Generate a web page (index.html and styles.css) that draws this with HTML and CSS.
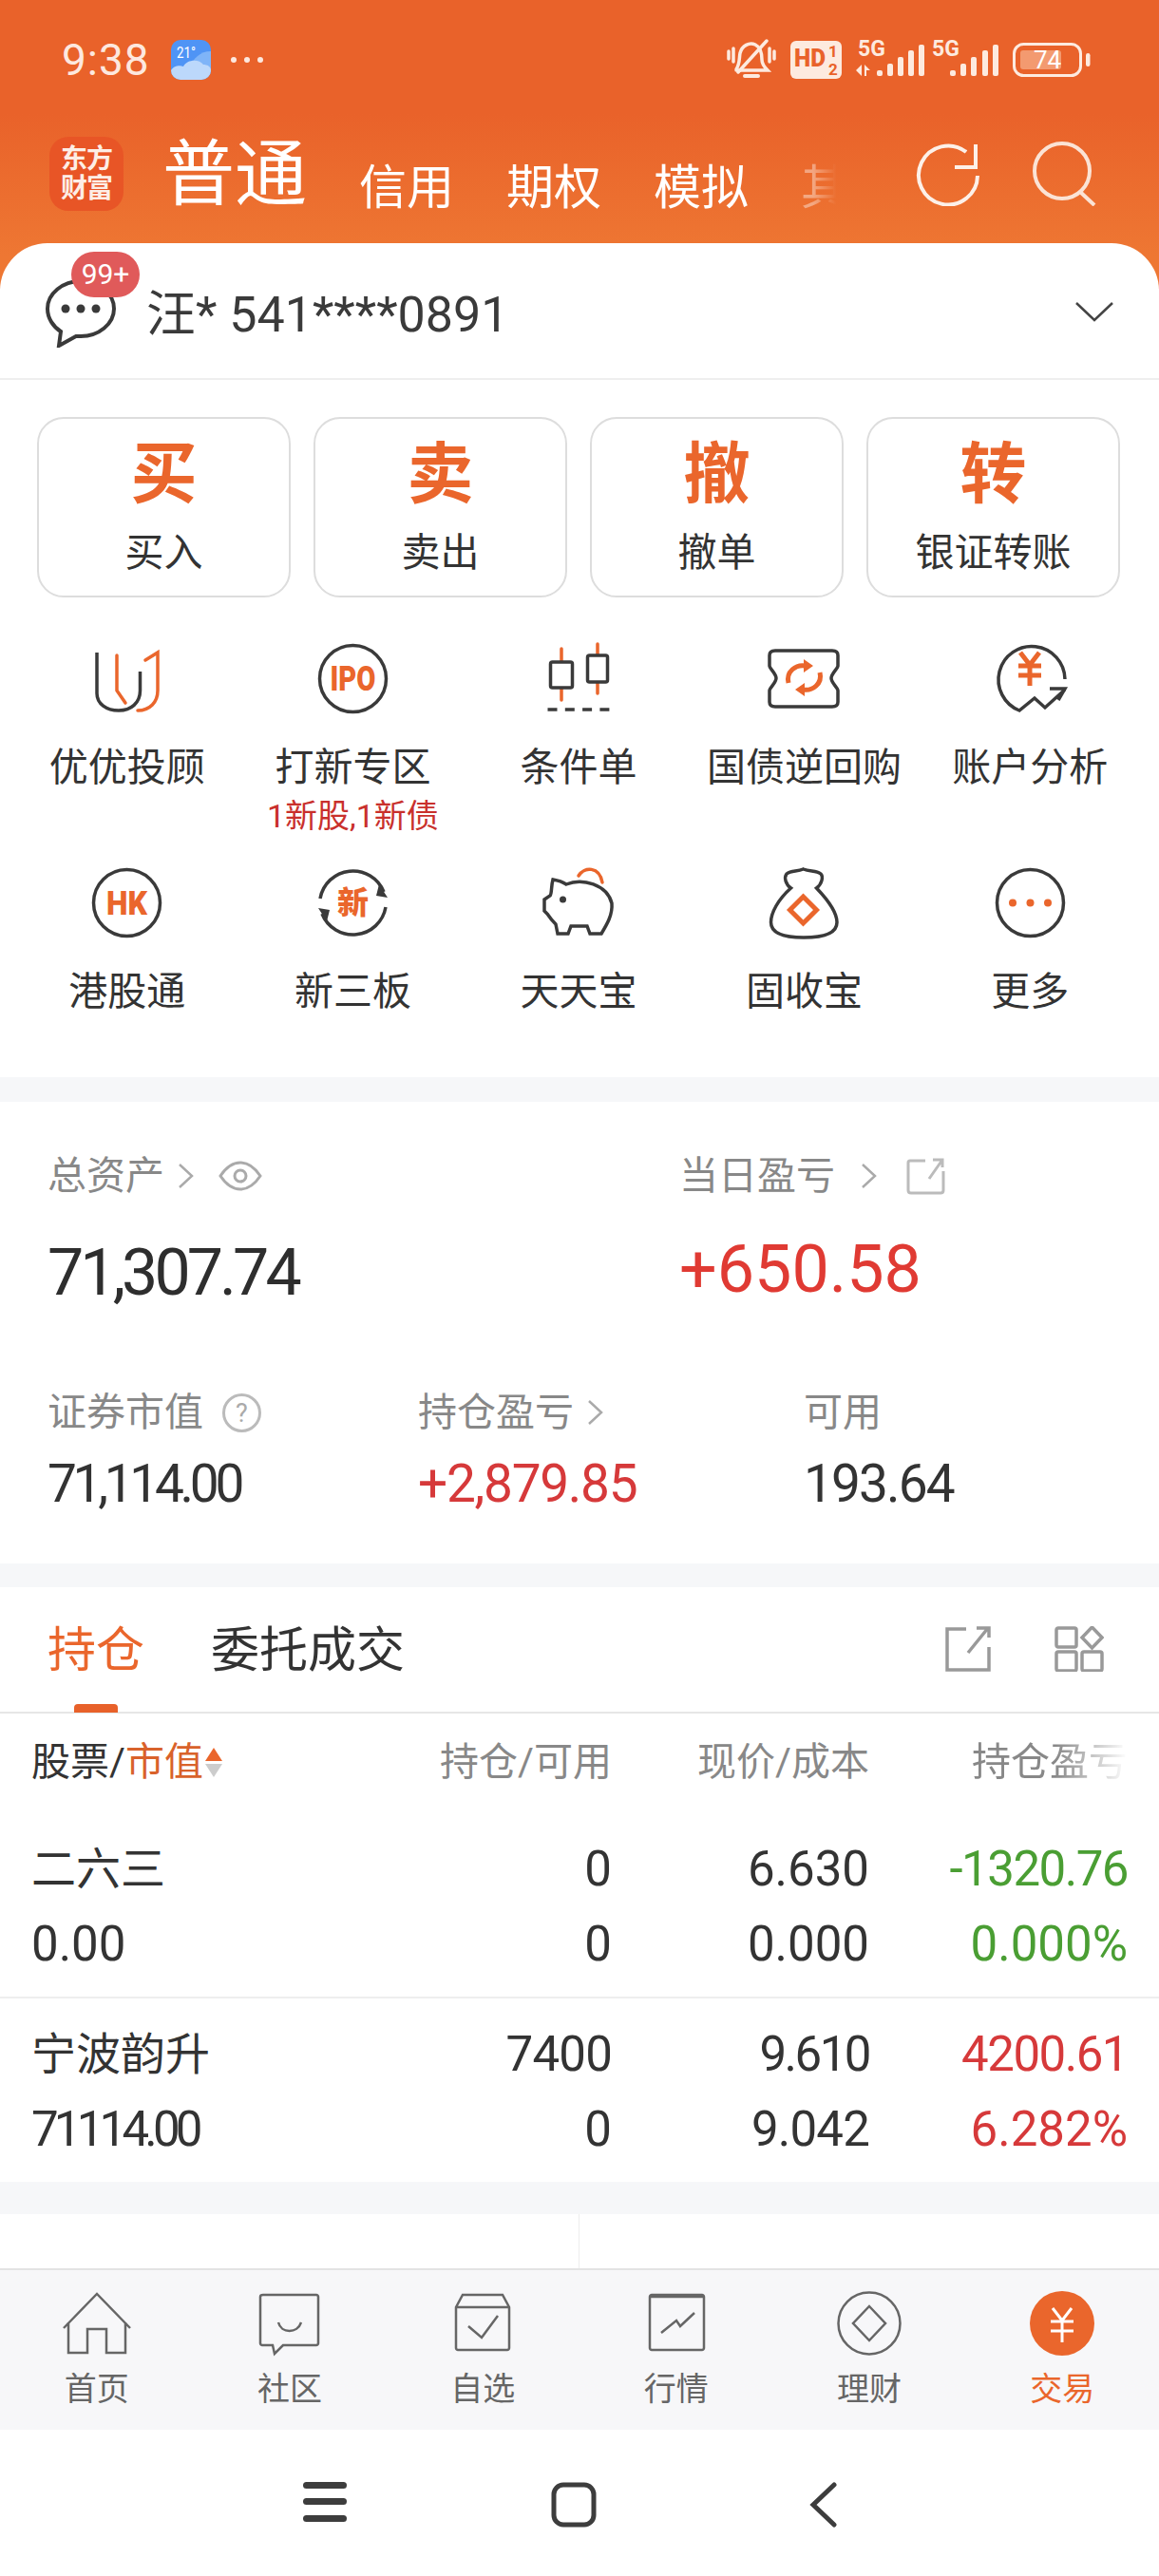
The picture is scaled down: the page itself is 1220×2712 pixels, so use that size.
FILE: index.html
```html
<!DOCTYPE html>
<html lang="zh">
<head>
  <meta charset="UTF-8">
  <title>东方财富 交易</title>
  <link rel="stylesheet" href="styles.css">
</head>
<body>
<div class="page">

  <header class="header">
    <div class="status">
      <span class="time">9:38</span>
      <svg class="weather" viewBox="0 0 42 42" width="42" height="42">
        <rect width="42" height="42" rx="10" fill="#4f94f5"/>
        <path d="M42 12C30 12 24 20 20 27L42 34Z" fill="#7fb4f8"/>
        <path d="M0 32C4 26 10 27 13 28C17 20 30 20 34 26C38 26 42 28 42 32V32A10 10 0 0 1 32 42H10A10 10 0 0 1 0 32Z" fill="#bcd8fb"/>
        <text x="6" y="19" class="weather-text" textLength="20" lengthAdjust="spacingAndGlyphs">21°</text>
      </svg>
      <span class="more-dots"><i></i><i></i><i></i></span>
      <div class="status-right">
        <svg viewBox="0 0 52 44" width="52" height="44" fill="none" stroke="#fdeadf" stroke-width="3.500" stroke-linecap="round">
          <path d="M10 32C14 26 13 20 14 15C16 7 24 3 30 6C36 9 37 16 37 22C37 27 40 30 43 33H10"/>
          <path d="M12 35L42 2"/>
          <path d="M19 39H33" stroke-width="4"/>
          <path d="M2 13V21M7 10V24M45 10V24M50 13V21"/>
        </svg>
        <svg viewBox="0 0 54 40" width="54" height="40">
          <rect width="54" height="40" rx="6" fill="#fdeadf"/>
          <text x="4" y="27" class="hd-text" textLength="33" lengthAdjust="spacingAndGlyphs">HD</text>
          <text x="40" y="17" class="hd-small">1</text>
          <text x="40" y="36" class="hd-small">2</text>
        </svg>
        <svg class="sig" viewBox="0 0 72 42" width="72" height="42" fill="#fdeadf">
          <text x="2" y="17" class="five-g">5G</text>
          <path d="M0 32L6 26V38ZM9 26L15 32L11 32V38H9Z"/>
          <rect x="22" y="32" width="6" height="6" rx="2"/><rect x="33" y="25" width="6" height="13" rx="2"/><rect x="44" y="18" width="6" height="20" rx="2"/><rect x="55" y="11" width="6" height="27" rx="2"/><rect x="66" y="5" width="6" height="33" rx="2"/>
        </svg>
        <svg class="sig sig-two" viewBox="0 0 72 42" width="72" height="42" fill="#fdeadf">
          <text x="2" y="17" class="five-g">5G</text>
          <rect x="21" y="32" width="6" height="6" rx="2"/><rect x="32" y="25" width="6" height="13" rx="2"/><rect x="43" y="18" width="6" height="20" rx="2"/><rect x="55" y="11" width="6" height="27" rx="2"/><rect x="66" y="5" width="6" height="33" rx="2"/>
        </svg>
        <svg viewBox="0 0 82 36" width="82" height="36">
          <rect x="1.500" y="1.500" width="70" height="33" rx="10" fill="none" stroke="#fdeadf" stroke-width="3"/>
          <rect x="8" y="8" width="43" height="20" rx="3" fill="#f39a70"/>
          <rect x="77" y="11" width="4.500" height="14" rx="2.200" fill="#fdeadf"/>
          <text x="22" y="27" class="batt-text">74</text>
        </svg>
      </div>
    </div>
    <div class="tabbar">
      <div class="logo">东方<br>财富</div>
      <span class="tab-main">普通</span>
      <div class="tabs">
        <span>信用</span>
        <span>期权</span>
        <span>模拟</span>
        <span class="tab-fade">其</span>
      </div>
      <div class="tab-icons">
        <svg viewBox="0 0 68 68" width="68" height="68" fill="none" stroke="#fdf0e8" stroke-width="4">
          <path d="M65 36A31 31 0 1 1 53 11"/>
          <path d="M63 3V27H41"/>
        </svg>
        <svg viewBox="0 0 68 68" width="68" height="68" fill="none" stroke="#fbe3d5" stroke-width="4">
          <circle cx="31" cy="31" r="29"/>
          <path d="M50 53L65 67"/>
        </svg>
      </div>
    </div>
  </header>

  <main class="card">
    <div class="account">
      <div class="msg">
        <svg viewBox="0 0 74 72" width="74" height="72" fill="none" stroke="#3a3a3a" stroke-width="4">
          <path d="M37 2C18 2 2 15 2 31C2 41 8 50 16 55L14 70L32 60C34 60 36 60 37 60C56 60 72 47 72 31C72 15 56 2 37 2Z"/>
          <circle cx="21" cy="31" r="4.500" fill="#3a3a3a" stroke="none"/>
          <circle cx="37" cy="31" r="4.500" fill="#3a3a3a" stroke="none"/>
          <circle cx="53" cy="31" r="4.500" fill="#3a3a3a" stroke="none"/>
        </svg>
        <span class="badge">99+</span>
      </div>
      <span class="acct-name">汪* 541****0891</span>
      <svg class="acct-arrow" viewBox="0 0 40 22" width="40" height="22" fill="none" stroke="#444" stroke-width="2.500"><path d="M1 2L20 20L39 2"/></svg>
    </div>

    <section class="trade">
      <div class="trade-btns">
        <div class="trade-btn"><b>买</b><span>买入</span></div>
        <div class="trade-btn"><b>卖</b><span>卖出</span></div>
        <div class="trade-btn"><b>撤</b><span>撤单</span></div>
        <div class="trade-btn"><b>转</b><span>银证转账</span></div>
      </div>
      <div class="tools">
        <div class="tool">
          <svg class="ico" viewBox="0 0 75 75">
            <path class="d" d="M6 10V53C6 64 16 71 29 71C42 71 51.500 63 51.500 50V30"/>
            <path class="o" d="M27 13V50L36 63"/>
            <path class="o" d="M57 18L70 10V50C70 62 62 71 49 71"/>
          </svg>
          <span>优优投顾</span>
        </div>
        <div class="tool">
          <svg class="ico" viewBox="0 0 75 75">
            <circle class="d" cx="37.500" cy="37.500" r="35"/>
            <text x="37.500" y="50" class="ico-text" textLength="48" lengthAdjust="spacingAndGlyphs">IPO</text>
          </svg>
          <span>打新专区</span>
          <em>1新股,1新债</em>
        </div>
        <div class="tool">
          <svg class="ico" viewBox="0 0 75 75">
            <path class="o" d="M20 6V60M58 1V53"/>
            <rect class="d fw" x="8.500" y="20" width="23" height="27" rx="2"/>
            <rect class="d fw" x="47.500" y="13" width="21" height="28" rx="2"/>
            <path class="d" d="M5.500 70H70.500" stroke-dasharray="10 8.300"/>
          </svg>
          <span>条件单</span>
        </div>
        <div class="tool">
          <svg class="ico" viewBox="0 0 75 75">
            <path class="d" d="M7 8H67C71 8 73 10 73 13V24C73 27 66 32 66 37C66 42 73 47 73 50V62C73 65 71 67 67 67H7C3 67 1 65 1 62V50C1 47 8 42 8 37C8 32 1 27 1 24V13C1 10 3 8 7 8Z"/>
            <path class="o thick" d="M21 42C18 30 29 22 39 24M54 31C57 43 46 51 36 49"/>
            <path class="o-fill" d="M37 17L47 24L37 31ZM38 42L28 49L38 56Z"/>
          </svg>
          <span>国债逆回购</span>
        </div>
        <div class="tool">
          <svg class="ico" viewBox="0 0 75 75">
            <path class="d" d="M74 38A35 35 0 1 0 26 71L42 58L53 68L74 49M58 48H74L67 60"/>
            <path class="o thick" d="M27 10L37 23L47 10M37 23V45M25 24H49M25 34H49"/>
          </svg>
          <span>账户分析</span>
        </div>
        <div class="tool">
          <svg class="ico" viewBox="0 0 75 75">
            <circle class="d" cx="37.500" cy="37.500" r="35"/>
            <text x="37.500" y="50" class="ico-text hk" textLength="43" lengthAdjust="spacingAndGlyphs">HK</text>
          </svg>
          <span>港股通</span>
        </div>
        <div class="tool">
          <svg class="ico" viewBox="0 0 75 75">
            <path class="d" d="M3 33A35 35 0 0 1 70 26M72 42A35 35 0 0 1 5 49"/>
            <path class="d-fill" d="M65 18L74 32L62 30ZM10 57L1 43L13 45Z"/>
            <text x="37.500" y="49" class="ico-text xin">新</text>
          </svg>
          <span>新三板</span>
        </div>
        <div class="tool">
          <svg class="ico" viewBox="0 0 75 75">
            <path class="o" d="M38 9C44 -1 60 -1 63 16"/>
            <path class="d" d="M11 13C17 14 22 16 25 18C42 11 68 18 73 38C74 50 68 60 62 70H50L47 62H30L27 70H16L14 60C10 56 7 52 5 49L2 46V34L8 30C10 28 9 20 11 13Z"/>
            <circle class="d-fill" cx="21.500" cy="34" r="3.500"/>
          </svg>
          <span>天天宝</span>
        </div>
        <div class="tool">
          <svg class="ico" viewBox="0 0 75 75">
            <path class="d" d="M23.500 22C10 34 2.500 48 2.500 58C2.500 70 18 74 37 74C56 74 72 70 72 58C72 48 62 34 50.500 22C56 18 58 10 55 7C50 3 44 5 36.500 2C30 5 24 3 19 7C16 11 18 18 23.500 22Z"/>
            <path class="o thick" d="M36.500 31L50.500 45L36.500 59L22.500 45Z"/>
          </svg>
          <span>固收宝</span>
        </div>
        <div class="tool">
          <svg class="ico" viewBox="0 0 75 75">
            <circle class="d" cx="37.500" cy="37.500" r="35"/>
            <circle class="o-fill" cx="19" cy="37.500" r="4"/>
            <circle class="o-fill" cx="37.500" cy="37.500" r="4"/>
            <circle class="o-fill" cx="56" cy="37.500" r="4"/>
          </svg>
          <span>更多</span>
        </div>
      </div>
    </section>

    <section class="assets">
      <div class="assets-top">
        <div class="asset-col">
          <div class="label">总资产
            <svg class="chev" viewBox="0 0 17 28"><path d="M2 2L15 14L2 26"/></svg>
            <svg class="eye" viewBox="0 0 46 32" width="46" height="32" fill="none" stroke="#aaa" stroke-width="3"><path d="M2 16C10 4 18 2 23 2C28 2 36 4 44 16C36 28 28 30 23 30C18 30 10 28 2 16Z"/><circle cx="23" cy="16" r="6"/></svg>
          </div>
          <div class="big">71,307.74</div>
        </div>
        <div class="asset-col right-col">
          <div class="label">当日盈亏
            <svg class="chev gap-l" viewBox="0 0 17 28"><path d="M2 2L15 14L2 26"/></svg>
            <svg class="share-sm" viewBox="0 0 41 39" width="41" height="39" fill="none" stroke="#bbb" stroke-width="3"><path d="M20 3H4C2 3 2 4 2 5V34C2 36 3 37 5 37H36C38 37 39 36 39 34V14"/><path d="M24 22L38 2M28 2H38V10"/></svg>
          </div>
          <div class="big red">+650.58</div>
        </div>
      </div>
      <div class="assets-bot">
        <div class="asset-cell c1">
          <div class="label">证券市值
            <svg class="help" viewBox="0 0 41 41" width="41" height="41"><circle cx="20.500" cy="20.500" r="19" fill="none" stroke="#bbb" stroke-width="3"/><text x="20.500" y="30" class="help-text">?</text></svg>
          </div>
          <div class="mid mid-a">71,114.00</div>
        </div>
        <div class="asset-cell c2">
          <div class="label">持仓盈亏
            <svg class="chev" viewBox="0 0 17 28"><path d="M2 2L15 14L2 26"/></svg>
          </div>
          <div class="mid mid-b red-2">+2,879.85</div>
        </div>
        <div class="asset-cell c3">
          <div class="label">可用</div>
          <div class="mid mid-c">193.64</div>
        </div>
      </div>
    </section>

    <section class="positions">
      <div class="pos-tabs">
        <span class="pos-tab active">持仓</span>
        <span class="pos-tab">委托成交</span>
        <div class="pos-icons">
          <svg viewBox="0 0 48 48" width="48" height="48" fill="none" stroke="#999" stroke-width="3.500"><path d="M22 3H2V46H46V22"/><path d="M24 28L45 2M33 2H46V12"/></svg>
          <svg viewBox="0 0 52 48" width="52" height="48" fill="none" stroke="#999" stroke-width="3.500"><rect x="2" y="2" width="21" height="20" rx="2"/><rect x="2" y="27" width="21" height="20" rx="2"/><rect x="29" y="27" width="21" height="20" rx="2"/><path d="M39.500 1L50 12L39.500 23L29 12Z"/></svg>
        </div>
      </div>
      <div class="pos-grid pos-head">
        <div class="head-first">股票/<span class="sort-key">市值</span><span class="sort"><i class="up"></i><i class="down"></i></span></div>
        <div>持仓/可用</div>
        <div>现价/成本</div>
        <div class="fade-right">持仓盈亏</div>
      </div>
      <div class="pos-grid pos-row">
        <div class="name">二六三</div>
        <div>0</div>
        <div>6.630</div>
        <div class="green tight">-1320.76</div>
        <div>0.00</div>
        <div>0</div>
        <div>0.000</div>
        <div class="green">0.000%</div>
      </div>
      <div class="pos-grid pos-row second">
        <div class="name">宁波韵升</div>
        <div class="tight-a">7400</div>
        <div class="tight-b">9.610</div>
        <div class="red-2 tight">4200.61</div>
        <div class="squeeze">71114.00</div>
        <div>0</div>
        <div class="tight-a">9.042</div>
        <div class="red-2">6.282%</div>
      </div>
    </section>

    <div class="blank"><i></i></div>

    <nav class="nav">
      <div class="nav-item">
        <svg viewBox="0 0 80 70" width="80" height="70"><path d="M5 40L40 4L75 40M10 34V66H30V41H50V66H70V34"/></svg>
        <span>首页</span>
      </div>
      <div class="nav-item">
        <svg viewBox="0 0 80 70" width="80" height="70"><path d="M12 5H68C69 5 70 6 70 7V56C70 57 69 58 68 58H33L24 67L22 58H11C10 58 9 57 9 56V7C9 6 10 5 12 5Z"/><path d="M28 34C31 46 48 46 52 34"/></svg>
        <span>社区</span>
      </div>
      <div class="nav-item">
        <svg viewBox="0 0 80 70" width="80" height="70"><path d="M19 5H61L68 18V61C68 62 67 63 66 63H14C13 63 12 62 12 61V18ZM12 18H68"/><path d="M25 38L39 50L56 27"/></svg>
        <span>自选</span>
      </div>
      <div class="nav-item">
        <svg viewBox="0 0 80 70" width="80" height="70"><path d="M14 5H67C68 5 69 6 69 7V61C69 62 68 63 67 63H14C13 63 12 62 12 61V7C12 6 13 5 14 5ZM12 7H69"/><path d="M24 45L40 32L44 38L59 24"/></svg>
        <span>行情</span>
      </div>
      <div class="nav-item">
        <svg viewBox="0 0 80 70" width="80" height="70"><circle cx="40" cy="35" r="32.500"/><path d="M40 17L57 35L40 53L23 35Z"/></svg>
        <span>理财</span>
      </div>
      <div class="nav-item active">
        <svg viewBox="0 0 80 70" width="80" height="70"><circle class="coin" cx="40" cy="35" r="34"/><path class="coin-mark" d="M30 19L40 32L50 19M40 32V55M28 33H52M28 43H52"/></svg>
        <span>交易</span>
      </div>
    </nav>

    <div class="sysbar">
      <svg viewBox="0 0 46 42" width="46" height="42" fill="#3d3d3d"><rect width="46" height="7" rx="3.500"/><rect y="17" width="46" height="7" rx="3.500"/><rect y="35" width="46" height="7" rx="3.500"/></svg>
      <svg viewBox="0 0 48 48" width="48" height="48" fill="none" stroke="#3d3d3d" stroke-width="5"><rect x="3" y="3" width="42" height="42" rx="10"/></svg>
      <svg viewBox="0 0 30 48" width="30" height="48" fill="none" stroke="#3d3d3d" stroke-width="5" stroke-linecap="round"><path d="M27 3L5 24L27 45"/></svg>
    </div>
  </main>
</div>
</body>
</html>
```

FILE: styles.css
```css
:root {
  --orange: #ea662c;
  --dark: #333;
  --gray: #888;
  --red: #d6393a;
  --green: #4a9e33;
  --gap: #f6f7f9;
}

* {
  box-sizing: border-box;
}

body {
  margin: 0;
  background: #fff;
  font-family: Roboto, "Noto Sans CJK SC", sans-serif;
  color: var(--dark);
}

.page {
  width: 1220px;
  height: 2712px;
  overflow: hidden;
}

/* header */
.header {
  height: 304px;
  background: linear-gradient(#e9622a 0, #e9622a 120px, #ee7733 270px);
  color: #fff;
  padding-top: 41px;
}

.status {
  display: flex;
  align-items: center;
  height: 44px;
  padding: 0 72px 0 65px;
}

.time {
  font-size: 46px;
  line-height: 44px;
  color: #fde8df;
  letter-spacing: 1px;
}

.weather {
  margin-left: 22px;
}

.weather-text {
  font-size: 16px;
  fill: #fff;
}

.more-dots {
  display: flex;
  gap: 8px;
  margin-left: 21px;
}

.more-dots i {
  width: 6px;
  height: 6px;
  border-radius: 50%;
  background: #fde8df;
}

.status-right {
  margin-left: auto;
  display: flex;
  align-items: center;
  gap: 15px;
}

.sig {
  overflow: visible;
}

.sig-two {
  margin-left: -9px;
}

.hd-text {
  font-size: 26px;
  font-weight: 900;
  fill: #e9622a;
}

.hd-small {
  font-size: 17px;
  font-weight: 700;
  fill: #e9622a;
}

.five-g {
  font-size: 23px;
  font-weight: 700;
}

.batt-text {
  font-size: 26px;
  fill: #fff;
}

.tabbar {
  display: flex;
  align-items: flex-end;
  padding: 0 65px 0 52px;
  margin-top: 59px;
  height: 78px;
}

.logo {
  width: 78px;
  height: 78px;
  border-radius: 20px;
  background: #e85526;
  color: #fdeee6;
  font-size: 28px;
  line-height: 31px;
  font-weight: 700;
  letter-spacing: -1px;
  text-align: center;
  padding-top: 8px;
}

.tab-main {
  margin-left: 41px;
  font-size: 76px;
  line-height: 80px;
  font-weight: 400;
  position: relative;
  top: 2px;
}

.tabs {
  display: flex;
  gap: 55px;
  margin-left: 55px;
  font-size: 50px;
  line-height: 60px;
  position: relative;
  top: 6px;
}

.tab-fade {
  opacity: .4;
  -webkit-mask-image: linear-gradient(to right, #000 25%, transparent 75%);
  mask-image: linear-gradient(to right, #000 25%, transparent 75%);
}

.tab-icons {
  margin-left: auto;
  display: flex;
  gap: 55px;
  align-self: center;
}

/* card */
.card {
  margin-top: -48px;
  position: relative;
  background: #fff;
  border-radius: 50px 50px 0 0;
}

.account {
  height: 144px;
  border-bottom: 2px solid #eee;
  display: flex;
  align-items: center;
  padding: 0 48px;
}

.msg {
  position: relative;
  width: 74px;
  height: 72px;
  margin-top: 6px;
}

.badge {
  position: absolute;
  left: 27px;
  top: -29px;
  width: 72px;
  height: 48px;
  border-radius: 24px;
  background: #e05a5a;
  color: #fff;
  font-size: 30px;
  line-height: 48px;
  text-align: center;
}

.acct-name {
  margin-left: 32px;
  font-size: 52px;
  color: #3a3a3a;
  margin-top: -2px;
}

.acct-arrow {
  margin-left: auto;
  margin-top: 2px;
}

/* trade buttons + tool grid */
.trade {
  height: 734px;
  padding-top: 39px;
}

.trade-btns {
  display: grid;
  grid-template-columns: repeat(4, 267px);
  gap: 24px;
  padding: 0 39px;
}

.trade-btn {
  height: 190px;
  border: 2px solid #ddd;
  border-radius: 28px;
  display: flex;
  flex-direction: column;
  align-items: center;
  padding-top: 16px;
}

.trade-btn b {
  font-size: 70px;
  line-height: 86px;
  color: var(--orange);
  font-weight: 700;
}

.trade-btn span {
  font-size: 41px;
  line-height: 56px;
  margin-top: 11px;
  color: #333;
}

.tools {
  display: grid;
  grid-template-columns: repeat(5, 237.6px);
  grid-template-rows: 236px 200px;
  padding: 48px 15px 0;
}

.tool {
  display: flex;
  flex-direction: column;
  align-items: center;
}

.tool span {
  font-size: 41px;
  line-height: 50px;
  margin-top: 31px;
  white-space: nowrap;
}

.tool em {
  font-style: normal;
  font-size: 34px;
  line-height: 40px;
  color: #c9302c;
  margin-top: 6px;
  white-space: nowrap;
}

.ico {
  width: 75px;
  height: 75px;
  fill: none;
  overflow: visible;
}

.ico .d {
  stroke: #3a3a3a;
  stroke-width: 3.5;
  fill: none;
}

.ico .d.fw {
  fill: #fff;
}

.ico .o {
  stroke: var(--orange);
  stroke-width: 3.5;
  fill: none;
  stroke-linecap: round;
}

.ico .o.thick {
  stroke-width: 5;
  stroke-linecap: butt;
}

.ico .o-fill {
  fill: var(--orange);
}

.ico .d-fill {
  fill: #3a3a3a;
}

.ico-text {
  fill: var(--orange);
  font-size: 37px;
  font-weight: 900;
  text-anchor: middle;
}

.ico-text.hk {
  font-size: 35px;
}

.ico-text.xin {
  font-size: 33px;
}

/* assets */
.assets {
  box-sizing: content-box;
  height: 486px;
  border-top: 26px solid var(--gap);
  border-bottom: 25px solid var(--gap);
  padding: 0 50px;
}

.label {
  display: flex;
  align-items: center;
  font-size: 41px;
  line-height: 46px;
  color: var(--gray);
  white-space: nowrap;
}

.chev {
  width: 17px;
  height: 28px;
  margin-left: 14px;
  fill: none;
  stroke: #aaa;
  stroke-width: 2.5;
}

.chev.gap-l {
  margin-left: 27px;
}

.eye {
  margin-left: 26px;
}

.share-sm {
  margin-left: 31px;
}

.help {
  margin-left: 20px;
}

.help-text {
  font-size: 27px;
  fill: #aaa;
  text-anchor: middle;
}

.assets-top {
  display: flex;
  padding-top: 55px;
}

.asset-col {
  width: 665px;
}

.right-col {
  width: auto;
}

.big {
  font-size: 68px;
  line-height: 80px;
  margin-top: 39px;
  letter-spacing: -3.9px;
  color: #2e2e2e;
}

.big.red {
  color: #e03a33;
  font-size: 70px;
  letter-spacing: 0;
  margin-top: 35px;
}

.assets-bot {
  display: flex;
  margin-top: 84px;
}

.asset-cell {
  flex: none;
}

.asset-cell.c1 {
  width: 390px;
}

.asset-cell.c2 {
  width: 406px;
}

.mid {
  font-size: 55px;
  line-height: 64px;
  margin-top: 20px;
  white-space: nowrap;
}

.mid-a {
  letter-spacing: -4.3px;
}

.mid-b {
  letter-spacing: -1.3px;
}

.mid-c {
  letter-spacing: -1.9px;
}

.red-2 {
  color: var(--red);
}

.green {
  color: var(--green);
}

/* positions */
.pos-tabs {
  height: 133px;
  border-bottom: 2px solid #e6e6e6;
  display: flex;
  padding: 35px 58px 0 50px;
  position: relative;
  font-size: 51px;
  line-height: 64px;
}

.pos-tab {
  margin-right: 70px;
}

.pos-tab.active {
  color: var(--orange);
}

.pos-tab.active::after {
  content: "";
  position: absolute;
  left: 78px;
  bottom: -1px;
  width: 46px;
  height: 9px;
  border-radius: 4px 4px 0 0;
  background: #e8612a;
}

.pos-icons {
  margin-left: auto;
  display: flex;
  gap: 67px;
  padding-top: 6px;
  align-items: flex-start;
}

.pos-grid {
  display: grid;
  grid-template-columns: 340px 271px 271px 272px;
  padding: 0 33px;
  text-align: right;
}

.pos-grid > div:nth-child(4n + 1) {
  text-align: left;
}

.pos-head {
  height: 119px;
  padding-top: 28px;
  font-size: 41px;
  line-height: 46px;
  color: var(--gray);
  align-items: start;
}

.head-first {
  color: #333;
  display: flex;
  align-items: center;
}

.sort-key {
  color: #d9622b;
}

.sort {
  display: flex;
  flex-direction: column;
  gap: 3px;
  margin-left: 2px;
}

.sort i {
  width: 0;
  height: 0;
  border-left: 9px solid transparent;
  border-right: 9px solid transparent;
}

.sort .up {
  border-bottom: 14px solid var(--orange);
}

.sort .down {
  border-top: 14px solid #ccc;
}

.fade-right {
  -webkit-mask-image: linear-gradient(to right, #000 72%, transparent 100%);
  mask-image: linear-gradient(to right, #000 72%, transparent 100%);
}

.pos-row {
  grid-auto-rows: 79px;
  font-size: 51px;
  line-height: 79px;
  padding-top: 5px;
  padding-bottom: 16px;
  border-bottom: 2px solid #eee;
  white-space: nowrap;
}

.pos-row.second {
  padding-top: 19px;
  padding-bottom: 16px;
  border-bottom: 0;
}

.pos-row .name {
  font-size: 47px;
}

.tight {
  letter-spacing: -1.5px;
}

.tight-a {
  letter-spacing: -.8px;
}

.tight-b {
  letter-spacing: -2.5px;
}

.squeeze {
  letter-spacing: -4.8px;
}

.blank {
  height: 91px;
  border-top: 34px solid var(--gap);
  display: flex;
  justify-content: center;
}

.blank i {
  width: 1px;
  height: 57px;
  background: #eee;
  margin-left: -2px;
}

/* bottom nav */
.nav {
  height: 170px;
  background: #f7f7f9;
  border-top: 2px solid #e3e3e3;
  display: grid;
  grid-template-columns: repeat(6, 1fr);
  padding-top: 21px;
}

.nav-item {
  display: flex;
  flex-direction: column;
  align-items: center;
  font-size: 34px;
  line-height: 40px;
  color: #666;
}

.nav-item svg {
  fill: none;
  stroke: #666;
  stroke-width: 2.500;
}

.nav-item span {
  margin-top: 14px;
}

.nav-item.active {
  color: var(--orange);
}

.nav-item svg .coin {
  fill: var(--orange);
  stroke: none;
}

.nav-item svg .coin-mark {
  stroke: #fff;
  stroke-width: 3;
}

.sysbar {
  height: 153px;
  background: #fff;
  display: flex;
  align-items: flex-start;
  padding: 55px 0 0 319px;
  gap: 215px;
}

.sysbar svg + svg + svg {
  margin-left: 8px;
}
```
